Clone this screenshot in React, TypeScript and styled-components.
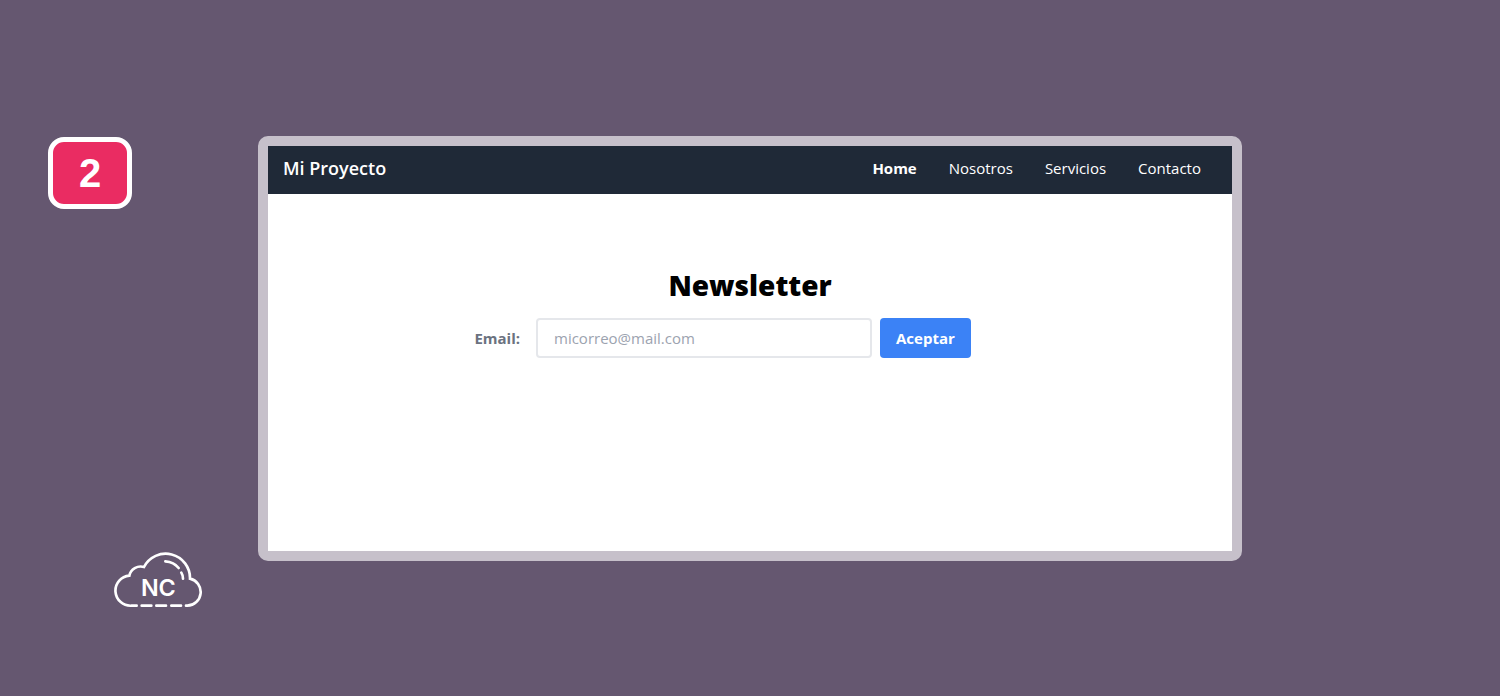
import React from 'react';
import styled, { createGlobalStyle } from 'styled-components';

const GlobalStyle = createGlobalStyle`
  *, *::before, *::after { box-sizing: border-box; }
  body {
    margin: 0;
    background: #655770;
    font-family: "Open Sans", "Noto Sans", sans-serif;
    font-size: 15px;
    line-height: 24px;
  }
`;

const Stage = styled.main`
  display: grid;
  grid-template-columns: 258px minmax(0, 1fr) 258px;
  align-items: start;
  min-height: 100vh;
  padding: 136px 0 88px;
`;

const Rail = styled.aside`
  display: flex;
  flex-direction: column;
  justify-content: space-between;
  align-self: stretch;
  padding: 1px 0 0 48px;
`;

const StepBadge = styled.div`
  display: flex;
  align-items: center;
  justify-content: center;
  width: 84px;
  height: 72px;
  border: 5px solid #fff;
  border-radius: 16px;
  background: #ea2c62;
  color: #fff;
  font: bold 40px/40px "Liberation Sans", Arial, sans-serif;
`;

const Logo = styled.svg`
  display: block;
  margin-left: 66px;
`;

const Frame = styled.section`
  border: 10px solid #c6c0ca;
  border-radius: 10px;
  background: #c6c0ca;
`;

const NavBar = styled.header`
  display: flex;
  align-items: center;
  justify-content: space-between;
  height: 48px;
  padding: 0 31px 4px 15px;
  background: #1f2937;
`;

const Brand = styled.a`
  color: #fff;
  font-size: 18px;
  font-weight: 600;
  text-decoration: none;
`;

const NavLinks = styled.nav`
  display: flex;
  gap: 32px;
`;

const NavLink = styled.a<{ $active?: boolean }>`
  color: #fff;
  font-weight: ${({ $active }) => ($active ? 700 : 400)};
  text-decoration: none;
`;

const Content = styled.div`
  min-height: 357px;
  padding: 71px 16px 16px;
  background: #fff;
`;

const Title = styled.h1`
  margin: 0 0 13px;
  color: #000;
  font-size: 28px;
  font-weight: 800;
  line-height: 40px;
  text-align: center;
`;

const Form = styled.form`
  display: grid;
  grid-template-columns: 152px 352px auto;
  align-items: center;
  justify-content: start;
  max-width: 764px;
  margin: 0 auto;
`;

const Label = styled.label`
  color: #6b7280;
  font-weight: 700;
  text-align: right;
`;

const EmailInput = styled.input`
  height: 40px;
  margin-left: 16px;
  padding: 0 16px;
  border: 2px solid #e5e7eb;
  border-radius: 4px;
  background: #fff;
  color: #374151;
  font: inherit;
  &::placeholder { color: #9ca3af; opacity: 1; }
`;

const Submit = styled.button`
  height: 40px;
  margin-left: 8px;
  padding: 0 16px;
  border: 0;
  border-radius: 4px;
  background: #3b82f6;
  color: #fff;
  font: inherit;
  font-weight: 700;
`;

const links = ['Home', 'Nosotros', 'Servicios', 'Contacto'];

function CloudLogo() {
  return (
    <Logo width="90" height="56" viewBox="-3 0 270 168" fill="none" stroke="#fff" strokeWidth="8" strokeLinecap="round" role="img" aria-label="NC">
      <path d="M65 161H50A45 45 0 0 1 43 71A35 35 0 0 1 87 45A73 73 0 0 1 225 80A41 41 0 0 1 217 161H213" />
      <path d="M80 161H109M124 161H153M169 161H198" />
      <path d="M151 28Q177 30 191 48M199 62Q204 70 204 80" />
      <text x="130" y="131" textAnchor="middle" fill="#fff" stroke="none" fontFamily="Inter, sans-serif" fontSize="70" fontWeight="600">NC</text>
    </Logo>
  );
}

export default function App() {
  return (
    <>
      <GlobalStyle />
      <Stage>
        <Rail>
          <StepBadge>2</StepBadge>
          <CloudLogo />
        </Rail>
        <Frame>
          <NavBar>
            <Brand href="#">Mi Proyecto</Brand>
            <NavLinks>
              {links.map((name, i) => (
                <NavLink key={name} href="#" $active={i === 0}>{name}</NavLink>
              ))}
            </NavLinks>
          </NavBar>
          <Content>
            <Title>Newsletter</Title>
            <Form onSubmit={(e) => e.preventDefault()}>
              <Label htmlFor="email">Email:</Label>
              <EmailInput id="email" type="email" placeholder="micorreo@mail.com" />
              <Submit type="submit">Aceptar</Submit>
            </Form>
          </Content>
        </Frame>
      </Stage>
    </>
  );
}
